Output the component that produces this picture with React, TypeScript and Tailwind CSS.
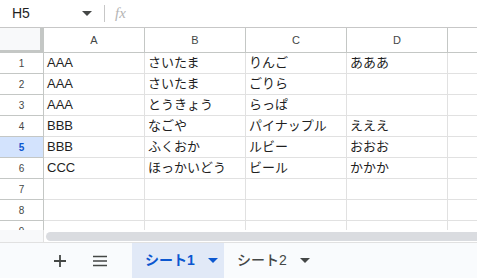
import { Fragment } from "react";

const cols = ["A", "B", "C", "D", ""];

const data: string[][] = [
  ["AAA", "さいたま", "りんご", "あああ"],
  ["AAA", "さいたま", "ごりら", ""],
  ["AAA", "とうきょう", "らっぱ", ""],
  ["BBB", "なごや", "パイナップル", "えええ"],
  ["BBB", "ふくおか", "ルビー", "おおお"],
  ["CCC", "ほっかいどう", "ビール", "かかか"],
  ["", "", "", ""],
  ["", "", "", ""],
  ["", "", "", ""],
];

function Caret({ className }: { className?: string }) {
  return (
    <svg width="10" height="5" viewBox="0 0 10 5" className={className}>
      <path d="M0 0h10L5 5z" fill="currentColor" />
    </svg>
  );
}

export default function App() {
  return (
    <div
      className="w-[477px] h-[278px] overflow-hidden bg-white flex flex-col text-[#1f1f1f]"
      style={{ fontFamily: '"Liberation Sans", Arial, "Noto Sans CJK JP", sans-serif' }}
    >
      {/* formula bar */}
      <div className="h-[28px] shrink-0 border-b border-[#c7c7c7] flex items-center">
        <div className="w-[98px] pl-[12px] pr-[6px] flex items-center justify-between text-[14px]">
          <span>H5</span>
          <Caret className="text-[#444746]" />
        </div>
        <div className="w-px h-[17px] bg-[#c7c7c7] ml-[6px]" />
        <span className="ml-[10px] text-[15px] italic text-[#b4b4b4] font-['Liberation_Serif',serif]">fx</span>
      </div>

      {/* grid */}
      <div className="h-[202px] shrink-0 overflow-hidden">
        <div className="grid grid-cols-[44px_101px_101px_101px_101px_101px]">
          <div className="h-[25px] bg-[#f8f9fa] border-r-4 border-b-[3px] border-[#c4c7c5]" />
          {cols.map((c, i) => (
            <div
              key={i}
              className="h-[25px] border-r border-b border-[#c4c7c5] flex items-center justify-center text-[11px] text-[#444746]"
            >
              {c}
            </div>
          ))}
          {data.map((row, r) => (
            <Fragment key={r}>
              <div
                className={
                  "h-[21px] border-r border-b border-[#c4c7c5] flex items-center justify-center text-[10px] " +
                  (r === 4 ? "bg-[#d3e3fd] font-bold text-[#0b57d0]" : "text-[#444746]")
                }
              >
                {r + 1}
              </div>
              {[...row, ""].map((v, c) => (
                <div
                  key={c}
                  className="h-[21px] border-r border-b border-[#e1e1e1] flex items-center px-[3px] text-[13px] whitespace-nowrap overflow-hidden"
                >
                  {v}
                </div>
              ))}
            </Fragment>
          ))}
        </div>
      </div>

      {/* scrollbar */}
      <div className="h-[13px] shrink-0 flex items-center border-b border-[#e1e1e1]">
        <div className="w-[44px] h-full border-r border-[#e1e1e1] bg-[#f8f9fa]" />
        <div className="flex-1 h-[9px] ml-[2px] rounded-l-full bg-[#dadce0]" />
      </div>

      {/* sheet tabs */}
      <div className="flex-1 bg-[#f9fbfd] flex items-stretch">
        <div className="w-[132px] flex items-center">
          <svg width="14" height="14" viewBox="0 0 14 14" className="ml-[53px] text-[#444746]">
            <path d="M7 1v12M1 7h12" stroke="currentColor" strokeWidth="1.8" />
          </svg>
          <svg width="16" height="12" viewBox="0 0 16 12" className="ml-[25px] text-[#444746]">
            <path d="M1 1.5h14M1 6h14M1 10.5h14" stroke="currentColor" strokeWidth="1.6" />
          </svg>
        </div>
        <div className="w-[92px] bg-[#e1e9f7] flex items-center pl-[13px] text-[#0b57d0] text-[14px] font-bold">
          <span>シート1</span>
          <Caret className="ml-[13px]" />
        </div>
        <div className="flex items-center pl-[13px] text-[#444746] text-[14px] font-medium">
          <span>シート2</span>
          <Caret className="ml-[13px]" />
        </div>
      </div>
    </div>
  );
}
